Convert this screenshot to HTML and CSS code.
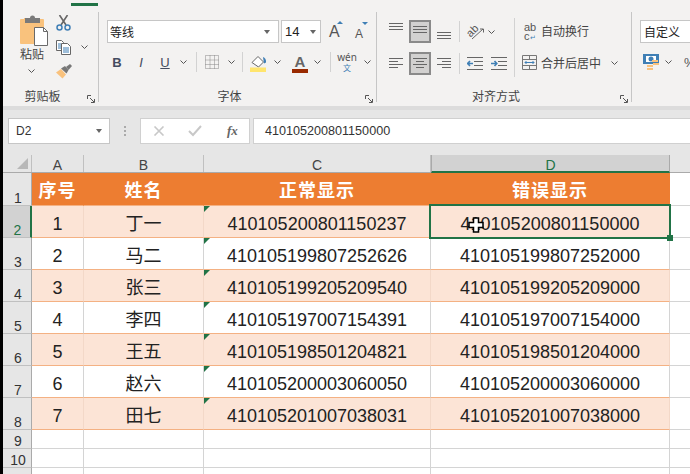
FILE: index.html
```html
<!DOCTYPE html>
<html lang="zh">
<head>
<meta charset="utf-8">
<title>身份证号显示</title>
<link rel="stylesheet" href="styles.css">
</head>
<body>
<div class="strip"></div>
<div class="app">
  <header class="ribbon">
    <div class="tabline"></div>
    <div class="groups">
      <section class="group g-clip">
        <div class="clip-body">
          <div class="paste">
            <svg class="i-paste" width="28" height="31" viewBox="0 0 28 31"><path d="M1 4h3v-1h16v1h3a1 1 0 0 1 1 1v23a1 1 0 0 1-1 1H1a1 1 0 0 1-1-1V5a1 1 0 0 1 1-1z" fill="#f9c27d"/><path d="M5 3h5a2.500 2.500 0 0 1 5 0h5v5H5z" fill="#7a7a7a"/><path d="M14.500 12.500h9l4 4v14h-13z" fill="#fff" stroke="#6a6a6a"/><path d="M23.500 12.500v4h4" fill="none" stroke="#6a6a6a"/></svg>
            <span class="paste-text">粘贴</span>
            <svg class="chev" width="7" height="4" viewBox="0 0 7 4"><path d="M.5.5l3 3 3-3" fill="none" stroke="#555"/></svg>
          </div>
          <div class="tools">
            <svg class="i-cut" width="15" height="16" viewBox="0 0 15 16"><path d="M3.500 0l6.500 10M11.500 0L5 10" stroke="#666" stroke-width="1.600" fill="none"/><circle cx="3.500" cy="12.500" r="2.500" fill="none" stroke="#3f7fb5" stroke-width="1.500"/><circle cx="11.500" cy="12.500" r="2.500" fill="none" stroke="#3f7fb5" stroke-width="1.500"/></svg>
            <div class="copy-row">
              <svg width="16" height="15" viewBox="0 0 16 15"><path d="M.5.5h5l2 2v8h-7z" fill="#fff" stroke="#666"/><path d="M2 4h3M2 6h3M2 8h3" stroke="#3f7fb5"/><path d="M5.500 3.500h6l3 3v8h-9z" fill="#fff" stroke="#666"/><path d="M7 8h6M7 10h6M7 12h6" stroke="#3f7fb5"/></svg>
              <svg class="chev" width="7" height="4" viewBox="0 0 7 4"><path d="M.5.5l3 3 3-3" fill="none" stroke="#555"/></svg>
            </div>
            <svg width="16" height="15" viewBox="0 0 16 15"><path d="M0 8.500l5-3.500 5 5.500-3.500 4z" fill="#f9c27d"/><path d="M5 4.500l4-2.500 3.500 4-2 3.500z" fill="#777"/><path d="M10 3l4-3 2 2-3.500 4z" fill="#777"/></svg>
          </div>
        </div>
        <div class="glabel">剪贴板<svg class="launch" width="8" height="8" viewBox="0 0 8 8"><path d="M.5 4V.5H4M3 3l4 4M7.500 4v3.500H4" fill="none" stroke="#555"/></svg></div>
      </section>

      <section class="group g-font">
        <div class="font-row1">
          <div class="select font-name"><span>等线</span><i class="caret"></i></div>
          <div class="select font-size"><span>14</span><i class="caret"></i></div>
          <div class="grow-a big">A<i class="up"></i></div>
          <div class="grow-a small">A<i class="down"></i></div>
        </div>
        <div class="font-row2">
          <b class="fmt b-b">B</b>
          <i class="fmt b-i">I</i>
          <u class="fmt b-u">U</u>
          <svg class="chev c-u" width="7" height="4" viewBox="0 0 7 4"><path d="M.5.5l3 3 3-3" fill="none" stroke="#555"/></svg>
          <span class="vsep s1"></span>
          <svg class="i-border" width="14" height="14" viewBox="0 0 14 14"><path d="M.5.5h13v13H.5zM5 .5v13M9.500.5v13M.5 5h13M.5 9.500h13" fill="none" stroke="#888" stroke-dasharray="1 1"/></svg>
          <svg class="chev c-b" width="7" height="4" viewBox="0 0 7 4"><path d="M.5.5l3 3 3-3" fill="none" stroke="#555"/></svg>
          <span class="vsep s2"></span>
          <svg class="i-fill" width="17" height="17" viewBox="0 0 17 17"><path d="M2 7.500L8 1.500l5.500 5.500-5 5z" fill="#fff" stroke="#666"/><path d="M13 2c2 .5 3.500 3 3 5.500l-2 1z" fill="#3f7fb5"/><path d="M0 12.500h16V17H0z" fill="#ffe56d"/></svg>
          <svg class="chev c-f" width="7" height="4" viewBox="0 0 7 4"><path d="M.5.5l3 3 3-3" fill="none" stroke="#555"/></svg>
          <div class="font-color">A</div>
          <svg class="chev c-c" width="7" height="4" viewBox="0 0 7 4"><path d="M.5.5l3 3 3-3" fill="none" stroke="#555"/></svg>
          <span class="vsep s3"></span>
          <div class="wen"><span>wén</span><em>文</em></div>
          <svg class="chev c-w" width="7" height="4" viewBox="0 0 7 4"><path d="M.5.5l3 3 3-3" fill="none" stroke="#555"/></svg>
        </div>
        <div class="glabel">字体<svg class="launch" width="8" height="8" viewBox="0 0 8 8"><path d="M.5 4V.5H4M3 3l4 4M7.500 4v3.500H4" fill="none" stroke="#555"/></svg></div>
      </section>

      <section class="group g-align">
        <div class="align-body">
          <div class="align-left">
            <div class="al-row">
              <span class="al high"><svg width="14" height="8" viewBox="0 0 14 8"><path d="M0 .5h14M0 3.500h14M0 6.500h14" stroke="#666"/></svg></span>
              <span class="al on up-a"><svg width="14" height="8" viewBox="0 0 14 8"><path d="M0 .5h14M0 3.500h14M0 6.500h14" stroke="#666"/></svg></span>
              <span class="al low"><svg width="14" height="8" viewBox="0 0 14 8"><path d="M0 .5h14M0 3.500h14M0 6.500h14" stroke="#666"/></svg></span>
            </div>
            <div class="al-row">
              <span class="al"><svg width="14" height="11" viewBox="0 0 14 11"><path d="M0 .5h14M0 3.500h9M0 6.500h14M0 9.500h9" stroke="#666"/></svg></span>
              <span class="al on"><svg width="14" height="11" viewBox="0 0 14 11"><path d="M0 .5h14M3 3.500h8M0 6.500h14M3 9.500h8" stroke="#666"/></svg></span>
              <span class="al"><svg width="14" height="11" viewBox="0 0 14 11"><path d="M0 .5h14M5 3.500h9M0 6.500h14M5 9.500h9" stroke="#666"/></svg></span>
            </div>
          </div>
          <div class="align-mid">
            <div class="orient">
              <svg width="18" height="16" viewBox="0 0 18 16"><text class="orient-text" x="0" y="11" transform="rotate(-45 5 8)">ab</text><path d="M5 15l11-10M13 5h3.500v3.500" fill="none" stroke="#666"/></svg>
              <svg class="chev" width="7" height="4" viewBox="0 0 7 4"><path d="M.5.5l3 3 3-3" fill="none" stroke="#555"/></svg>
            </div>
            <div class="indent">
              <svg width="16" height="13" viewBox="0 0 16 13"><path d="M0 .5h16M7 4.500h9M7 8.500h9M0 12.500h16" stroke="#666"/><path d="M0 6.500h6M3 4L.7 6.500 3 9" fill="none" stroke="#3f7fb5" stroke-width="1.600"/></svg>
              <svg width="16" height="13" viewBox="0 0 16 13"><path d="M0 .5h16M7 4.500h9M7 8.500h9M0 12.500h16" stroke="#666"/><path d="M0 6.500h6M3.500 4L5.800 6.500 3.500 9" fill="none" stroke="#3f7fb5" stroke-width="1.600"/></svg>
            </div>
          </div>
          <span class="vsep s4"></span>
          <div class="align-right">
            <div class="wrap-row">
              <div class="abc"><span>ab</span><span>c<em>↵</em></span></div>
              <span class="al-text">自动换行</span>
            </div>
            <div class="merge-row">
              <svg width="15" height="15" viewBox="0 0 15 15"><path d="M.5.5h14v14H.5zM.5 4.500h14M.5 10.500h14M7.500.5v4M7.500 10.500v4" fill="none" stroke="#777"/><path d="M3 7.500h9M4.500 6L3 7.500 4.500 9M10.500 6L12 7.500 10.500 9" fill="none" stroke="#3f7fb5"/></svg>
              <span class="al-text">合并后居中</span>
              <svg class="chev" width="7" height="4" viewBox="0 0 7 4"><path d="M.5.5l3 3 3-3" fill="none" stroke="#555"/></svg>
            </div>
          </div>
        </div>
        <div class="glabel">对齐方式<svg class="launch" width="8" height="8" viewBox="0 0 8 8"><path d="M.5 4V.5H4M3 3l4 4M7.500 4v3.500H4" fill="none" stroke="#555"/></svg></div>
      </section>

      <section class="group g-num">
        <div class="select num-name"><span>自定义</span></div>
        <div class="num-row">
          <svg width="19" height="17" viewBox="0 0 19 17"><path d="M0 0h16v10H0z" fill="#3f7fb5"/><path d="M3 2h10v6H3z" fill="#fff"/><circle cx="8" cy="5" r="2.500" fill="#3f7fb5"/><path d="M9 6h6v2H9zM4 11h6v2H4zM4 14h6v2H4zM10 9h6v2h-6z" fill="#f9c27d"/></svg>
          <svg class="chev" width="7" height="4" viewBox="0 0 7 4"><path d="M.5.5l3 3 3-3" fill="none" stroke="#555"/></svg>
          <span class="pct">%</span>
        </div>
      </section>
    </div>
  </header>
  <div class="band"></div>
  <div class="formula-bar">
    <div class="name-box"><span>D2</span><i class="caret"></i></div>
    <div class="dots"><i></i><i></i><i></i></div>
    <div class="fx-box">
      <svg width="12" height="10" viewBox="0 0 12 10"><path d="M1.500 .5l9 9M10.500 .5l-9 9" stroke="#c8c8c8" stroke-width="1.600"/></svg>
      <svg width="14" height="12" viewBox="0 0 14 12"><path d="M1 6l4 4 8-9" fill="none" stroke="#c8c8c8" stroke-width="2"/></svg>
      <span class="fx">fx</span>
    </div>
    <div class="formula-input">410105200801150000</div>
  </div>

  <main class="sheet">
    <div class="row col-head">
      <div class="corner"><i></i></div>
      <div>A</div><div>B</div><div>C</div><div class="active">D</div><div></div>
    </div>
    <div class="row title">
      <div class="rh">1</div><div class="c">序号</div><div class="c">姓名</div><div class="c">正常显示</div><div class="c">错误显示</div><div class="c blank"></div>
    </div>
    <div class="row band-on">
      <div class="rh rh-on">2</div><div class="c">1</div><div class="c">丁一</div><div class="c flag">410105200801150237</div><div class="c selected">410105200801150000<i class="handle"></i><svg class="cursor" width="16" height="16" viewBox="0 0 16 16"><path d="M5.500 1h5v4.500h4.500v5h-4.500v4.500h-5v-4.500H1v-5h4.500z" fill="#fff" stroke="#000" stroke-width="1.500"/></svg></div><div class="c blank"></div>
    </div>
    <div class="row">
      <div class="rh">3</div><div class="c">2</div><div class="c">马二</div><div class="c flag">410105199807252626</div><div class="c">410105199807252000</div><div class="c blank"></div>
    </div>
    <div class="row band-on">
      <div class="rh">4</div><div class="c">3</div><div class="c">张三</div><div class="c flag">410105199205209540</div><div class="c">410105199205209000</div><div class="c blank"></div>
    </div>
    <div class="row">
      <div class="rh">5</div><div class="c">4</div><div class="c">李四</div><div class="c flag">410105197007154391</div><div class="c">410105197007154000</div><div class="c blank"></div>
    </div>
    <div class="row band-on">
      <div class="rh">6</div><div class="c">5</div><div class="c">王五</div><div class="c flag">410105198501204821</div><div class="c">410105198501204000</div><div class="c blank"></div>
    </div>
    <div class="row">
      <div class="rh">7</div><div class="c">6</div><div class="c">赵六</div><div class="c flag">410105200003060050</div><div class="c">410105200003060000</div><div class="c blank"></div>
    </div>
    <div class="row band-on">
      <div class="rh">8</div><div class="c">7</div><div class="c">田七</div><div class="c flag">410105201007038031</div><div class="c">410105201007038000</div><div class="c blank"></div>
    </div>
    <div class="row empty">
      <div class="rh">9</div><div class="c"></div><div class="c"></div><div class="c"></div><div class="c"></div><div class="c blank"></div>
    </div>
    <div class="row empty">
      <div class="rh">10</div><div class="c"></div><div class="c"></div><div class="c"></div><div class="c"></div><div class="c blank"></div>
    </div>
    <div class="row empty">
      <div class="rh">11</div><div class="c"></div><div class="c"></div><div class="c"></div><div class="c"></div><div class="c blank"></div>
    </div>
  </main>
</div>
</body>
</html>
```
FILE: styles.css
```css
* { box-sizing: border-box; }
html, body { margin: 0; height: 100%; overflow: hidden; }
body { display: flex; width: 690px; height: 474px; background: #fff; font-family: "Liberation Sans", "Noto Sans CJK SC", sans-serif; color: #222; }
.strip { width: 3px; background: #000; flex: none; }
.app { width: 687px; display: flex; flex-direction: column; overflow: hidden; }

/* ribbon */
.ribbon { height: 106px; flex: none; background: #f3f2f1; padding-top: 3px; }
.tabline { width: 27px; height: 3px; margin-left: 68px; background: #217346; }
.groups { display: flex; height: 91px; margin-top: 6px; }
.group { display: flex; flex-direction: column; border-right: 1px solid #c6c6c6; height: 90px; flex: none; position: relative; }
.g-clip { width: 96px; }
.g-font { width: 278px; padding-left: 8px; }
.g-align { width: 255px; }
.g-num { flex: 1; border-right: 0; padding: 8px 0 0 8px; }
.glabel { position: absolute; left: 0; right: 0; top: 76px; height: 16px; padding-right: 16px; text-align: center; font: 12px/16px "Noto Sans CJK SC", sans-serif; color: #444; }
.launch { position: absolute; right: 3px; top: 7px; }
.chev { flex: none; display: block; }

/* clipboard */
.clip-body { display: flex; }
.paste { width: 50px; padding: 3px 0 0 17px; display: flex; flex-direction: column; }
.i-paste { display: block; }
.paste-text { font: 12px/14px "Noto Sans CJK SC", sans-serif; color: #444; margin-top: 1px; }
.paste .chev { margin: 8px 0 0 8px; }
.tools { padding: 3px 0 0 3px; display: flex; flex-direction: column; align-items: flex-start; }
.copy-row { display: flex; align-items: center; gap: 9px; margin: 9px 0 9px; }
.copy-row .chev { margin-bottom: 2px; }

/* selects */
.select, .name-box { background: #fff; border: 1px solid #c6c6c6; display: flex; align-items: center; justify-content: space-between; }
.caret { width: 0; height: 0; border: 3.5px solid transparent; border-top: 4px solid #666; border-bottom: 0; }
.font-row1 { display: flex; margin-top: 8px; height: 23px; align-items: center; }
.font-name { width: 172px; height: 23px; padding: 0 8px 0 2px; font: 12px "Noto Sans CJK SC", sans-serif; color: #222; }
.font-name .caret { margin-left: auto; }
.font-size { width: 40px; height: 23px; margin-left: 2px; padding: 0 4px 0 3px; font-size: 13px; }
.grow-a { position: relative; color: #555; font-family: "Liberation Sans", sans-serif; line-height: 16px; }
.big { font-size: 16px; margin-left: 8px; width: 14px; margin-top: 1px; }
.small { font-size: 12px; margin-left: 12px; width: 14px; padding-top: 3px; margin-top: 1px; }
.up, .down { position: absolute; width: 0; height: 0; border: 3px solid transparent; }
.up { border-bottom: 3px solid #3f7fb5; border-top: 0; left: 8px; top: -3px; }
.down { border-top: 3px solid #3f7fb5; border-bottom: 0; left: 7px; top: -1px; }

.font-row2 { display: flex; align-items: center; height: 22px; margin-top: 8px; color: #555; }
.fmt { width: 12px; text-align: center; font-size: 13px; font-family: "Liberation Sans", sans-serif; color: #444c60; }
.b-b { margin-left: 4px; }
.b-i { margin-left: 12px; }
.b-u { margin-left: 12px; }
.c-u { margin-left: 9px; }
.vsep { display: block; width: 1px; height: 20px; background: #d2d2d2; flex: none; }
.s1 { margin-left: 9px; }
.i-border { margin-left: 8px; }
.c-b { margin-left: 9px; }
.s2 { margin-left: 7px; }
.i-fill { margin-left: 7px; margin-top: 3px; }
.c-f { margin-left: 7px; }
.font-color { width: 16px; margin-left: 11px; font: 15px/15px "Liberation Sans", sans-serif; font-weight: 700; text-align: center; color: #666; border-bottom: 4px solid #992a00; margin-top: 2px; }
.c-c { margin-left: 6px; }
.s3 { margin-left: 9px; }
.wen { margin-left: 8px; width: 16px; display: flex; flex-direction: column; align-items: center; color: #555; }
.wen span { font: 10px/8px "Noto Sans", sans-serif; white-space: nowrap; }
.wen em { font: 8px/9px "Noto Sans CJK SC", sans-serif; color: #3f7fb5; font-style: normal; margin-top: 2px; }
.c-w { margin-left: 9px; }

/* alignment */
.align-body { display: flex; padding: 8px 0 0 8px; height: 76px; }
.align-left { display: flex; flex-direction: column; gap: 9px; width: 74px; }
.al-row { display: flex; gap: 2px; }
.al { width: 22px; height: 23px; display: flex; align-items: center; justify-content: center; border: 1px solid transparent; }
.al.on { background: #d2d1d0; border: 2px solid #8a8a8a; }
.al.low { padding-top: 8px; }
.al.high { padding-bottom: 10px; }
.al.up-a { padding-bottom: 3px; }
.align-mid { width: 55px; display: flex; flex-direction: column; gap: 11px; padding-top: 1px; }
.orient, .indent { display: flex; height: 21px; border-left: 1px solid #d2d2d2; padding-left: 7px; align-items: center; }
.orient { gap: 3px; }
.orient-text { font: 11px "Liberation Sans", sans-serif; fill: #555; }
.indent { gap: 8px; }
.s4 { height: 59px; margin: -2px 0 0 0; }
.align-right { padding-left: 7px; display: flex; flex-direction: column; }
.wrap-row { display: flex; align-items: center; gap: 3px; height: 22px; padding-left: 2px; }
.abc { width: 14px; display: flex; flex-direction: column; font: 11px/8px "Liberation Sans", sans-serif; color: #555; padding-top: 1px; }
.abc span { display: block; height: 9px; white-space: nowrap; }
.abc em { color: #3f7fb5; font-style: normal; font-size: 7px; }
.al-text { font: 12px/16px "Noto Sans CJK SC", sans-serif; color: #444; white-space: nowrap; }
.merge-row { display: flex; align-items: center; height: 23px; margin-top: 9px; }
.merge-row .al-text { margin-left: 4px; }
.merge-row .chev { margin-left: 10px; }

/* number */
.num-name { width: 60px; height: 23px; padding-left: 3px; justify-content: flex-start; border-right: 0; font: 12px "Noto Sans CJK SC", sans-serif; color: #222; }
.num-row { display: flex; align-items: center; height: 22px; margin-top: 8px; padding-left: 3px; }
.num-row .chev { margin-left: 3px; }
.pct { margin-left: 12px; font-size: 13px; color: #555; }

/* formula bar */
.band { height: 4px; flex: none; background: #dcdcdc; }
.formula-bar { height: 45px; flex: none; background: #e6e6e6; padding: 8px 0 0 5px; display: flex; align-items: flex-start; }
.name-box { width: 102px; height: 26px; padding: 0 7px 0 7px; font-size: 12px; color: #333; }
.dots { width: 30px; height: 26px; display: flex; flex-direction: column; align-items: center; justify-content: center; gap: 2px; }
.dots i { width: 2px; height: 2px; background: #aaa; display: block; }
.fx-box { width: 110px; height: 26px; background: #fff; border: 1px solid #d0d0d0; display: flex; align-items: center; padding-left: 12px; gap: 23px; }
.fx { font: italic bold 13px "Liberation Serif", serif; color: #666; margin-left: 2px; }
.formula-input { margin-left: 3px; flex: 1; height: 26px; background: #fff; border: 1px solid #d0d0d0; border-right: 0; padding-left: 11px; font-size: 12.6px; line-height: 24px; color: #333; white-space: nowrap; }

/* sheet */
.sheet { flex: 1; display: flex; flex-direction: column; }
.row { display: grid; grid-template-columns: 29px 52px 120px 227px 239px 20px; height: 32px; flex: none; }
.col-head { height: 18px; background: #e6e6e6; border-bottom: 1px solid #aaa; font-size: 14px; line-height: 20px; color: #444; text-align: center; }
.col-head > div { border-right: 1px solid #c0c0c0; height: 17px; }
.col-head > div:last-child { border-right: 0; }
.col-head .active { background: #d2d2d2; border-bottom: 2px solid #217346; height: 18px; color: #217346; border-right: 1px solid #aaa; border-left: 1px solid #aaa; }
.corner { position: relative; }
.corner i { position: absolute; right: 3px; bottom: 3px; width: 11px; height: 11px; background: #b8b8b8; clip-path: polygon(100% 0, 100% 100%, 0 100%); }
.title { height: 33px; }

.rh { background: #e6e6e6; border-right: 1px solid #aaa; border-bottom: 1px solid #c0c0c0; display: flex; align-items: flex-end; justify-content: center; font-size: 14px; line-height: 14px; color: #333; padding-left: 2px; }
.rh-on { background: #d2d2d2; border-right: 2px solid #217346; color: #217346; }
.c { border-right: 1px solid #d4d4d4; border-bottom: 1px solid #d4d4d4; display: flex; align-items: center; justify-content: center; font: 18px/22px "Liberation Sans", "Noto Sans CJK SC", sans-serif; color: #222; position: relative; padding-top: 5px; white-space: nowrap; }
.blank { border-right: 0; background: #fff; }
.title .c:not(.blank) { background: #ed7d31; color: #fff; font-weight: 700; letter-spacing: 1px; padding-top: 4px; border-color: #ed7d31; border-bottom-color: #f4b183; }
.band-on .c:not(.blank) { background: #fce4d6; border-bottom-color: #f4b183; border-right-color: #f3d8c8; }
.row:not(.band-on):not(.title):not(.empty) .c:not(.blank) { border-bottom-color: #f4b183; }
.flag::before { content: ""; position: absolute; left: 0; top: 0; width: 6px; height: 6px; background: #217346; clip-path: polygon(0 0, 100% 0, 0 100%); }
.empty { height: 19px; }
.selected { z-index: 1; }
.selected::after { content: ""; position: absolute; left: -2px; top: -2px; right: -2px; bottom: -2px; border: 2px solid #217346; }
.handle { position: absolute; right: -4px; bottom: -4px; width: 6px; height: 6px; background: #217346; z-index: 1; }
.cursor { position: absolute; left: 37px; top: 11px; z-index: 2; }
```
